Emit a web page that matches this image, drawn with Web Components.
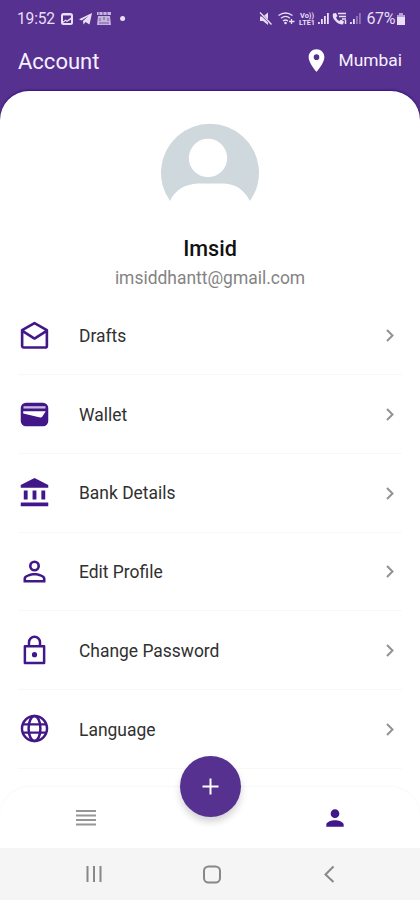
<!DOCTYPE html>
<html lang="en">
<head>
<meta charset="utf-8">
<meta name="viewport" content="width=device-width, initial-scale=1">
<title>Account</title>
<style>
    body {
        margin: 0;
        height: 900px;
        overflow: hidden;
        font-family: Roboto, "Noto Sans", sans-serif;
    }
</style>
</head>
<body>
<account-screen></account-screen>
<script>
const ICONS = {
    drafts: `<path fill="none" stroke="currentColor" stroke-width="1.9" stroke-linejoin="round" d="M3 8.100 12 3l9 5.100V19.600a1.100 1.100 0 0 1-1.100 1.100H4.100A1.100 1.100 0 0 1 3 19.600zM3.200 8.600 12 14.200l8.800-5.600"/>`,
    wallet: `<rect x="2" y="3.500" width="20" height="17" rx="3.800"/><path fill="none" stroke="#c9bbe0" stroke-width="1.700" d="M4 6.800h16"/><path fill="#fff" d="M3.800 9.700h16.400l-2.600 4a1.400 1.400 0 0 1-1.500.5L3.800 11.200z"/>`,
    bank: `<path d="M12 1.500 2 6.600v1.900h20V6.600zM4.200 10.500h2.800v6.500H4.200zM10.600 10.500h2.800v6.500h-2.800zM17 10.500h2.800v6.500H17zM2 19.300h20V22H2z"/>`,
    profile: `<path d="M12 5.900a2.100 2.100 0 1 1 0 4.200 2.100 2.100 0 0 1 0-4.200m0 9c2.970 0 6.100 1.460 6.100 2.100v1.100H5.900V17c0-.64 3.130-2.100 6.100-2.100M12 4a4 4 0 1 0 0 8 4 4 0 0 0 0-8m0 9c-2.670 0-8 1.340-8 4v3h16v-3c0-2.660-5.330-4-8-4"/>`,
    lock: `<path fill="none" stroke="currentColor" stroke-width="1.800" stroke-linejoin="round" d="M5 8.900h14v12.200H5zM8 8.800V6a4 4 0 0 1 8 0v2.800"/><circle cx="12" cy="15" r="1.900"/>`,
    globe: `<g fill="none" stroke="currentColor" stroke-width="1.800"><circle cx="12" cy="12" r="9.100"/><ellipse cx="12" cy="12" rx="4.300" ry="9.100"/><path d="M3.600 9h16.800M3.600 15h16.800"/></g>`,
    person: `<path d="M12 12a4 4 0 1 0 0-8 4 4 0 0 0 0 8m0 2c-2.670 0-8 1.340-8 4v2h16v-2c0-2.660-5.330-4-8-4"/>`,
    pin: `<path fill-rule="evenodd" d="M12 2C8.130 2 5 5.130 5 9c0 5.250 7 13 7 13s7-7.750 7-13c0-3.870-3.130-7-7-7m0 9.500a2.500 2.500 0 1 1 0-5 2.500 2.500 0 0 1 0 5"/>`
};

class AppIcon extends HTMLElement {
    connectedCallback() {
        this.attachShadow({ mode: "open" }).innerHTML = `
            <style>
                :host { display: block; flex: none; width: 33px; height: 33px; }
                svg { display: block; width: 100%; height: 100%; fill: currentColor; }
            </style>
            <svg viewBox="0 0 24 24">${ICONS[this.getAttribute("name")]}</svg>`;
    }
}

class StatusBar extends HTMLElement {
    connectedCallback() {
        this.attachShadow({ mode: "open" }).innerHTML = `
            <style>
                :host {
                    display: flex;
                    justify-content: space-between;
                    align-items: center;
                    box-sizing: border-box;
                    height: 37px;
                    padding: 0 14px 0 17px;
                    color: #e9dff6;
                }
                div { display: flex; align-items: center; }
                svg { display: block; fill: currentColor; }
                .time { width: 38px; font-size: 15.600px; letter-spacing: -.2px; }
                .percent { font-size: 16px; letter-spacing: -.4px; }
            </style>
            <div>
                <span class="time">19:52</span>
                <svg width="72" height="20" viewBox="55 9 72 20">
                    <path fill-rule="evenodd" d="M63.500 13h7a2.500 2.500 0 0 1 2.500 2.500v7a2.500 2.500 0 0 1-2.500 2.500h-7a2.500 2.500 0 0 1-2.500-2.500v-7a2.500 2.500 0 0 1 2.500-2.500m-.5 2.500v6l2.500-2 1.500 1 4-3v-2z"/>
                    <path d="M63 23l2.500-2 1.500 1 4-2.500V23z" fill="#56318f"/>
                    <path d="M79 19.200 92 13l-2.500 11.500-4-2.500-2 2.500-.5-3.500 5.500-5-7 4.500z"/>
                    <g opacity=".75">
                        <path d="M97 12h14v3H97zM98 16h12l1 9H97z"/>
                        <path d="M99 12v3M103 12v3M107 12v3M100 18v3M104 17v3M108 18v3M99 23h10" fill="none" stroke="#56318f" stroke-width=".7"/>
                    </g>
                    <circle cx="122.600" cy="18.500" r="2.500"/>
                </svg>
            </div>
            <div>
                <svg width="107" height="20" viewBox="258 9 107 20">
                    <path d="M259 16.500h3l5-4v12.500l-5-4h-3z"/>
                    <path d="m259 13 12 12" stroke="#56318f" stroke-width="2.400"/>
                    <path d="m259 12.500 11.500 12" stroke="currentColor" stroke-width="1.400"/>
                    <g fill="none" stroke="currentColor" stroke-width="1.300">
                        <path d="M277.500 15.500q7-5 14 0M280 18.200q4.500-3.500 9 0M282 21q2.500-2 5 0"/>
                        <path d="M290.500 19v5M288 21.500h5.500"/>
                    </g>
                    <circle cx="284.500" cy="23" r="1.300"/>
                    <text x="299" y="18" font-size="7" font-weight="700" textLength="14" lengthAdjust="spacingAndGlyphs">Vo))</text>
                    <text x="298" y="25" font-size="7" font-weight="700" textLength="16" lengthAdjust="spacingAndGlyphs">LTE1</text>
                    <path d="M317 22h1.800v2H317zM320 19h1.800v5H320zM323 16h1.800v8H323zM326 13h1.800v11H326z"/>
                    <path d="M332 13.500 335 13l1.500 3-1.500 1.500q1 2.500 3.500 3.500l1.500-1.500 3 2-1 3q-5 0-8-4-3-3-2-7"/>
                    <path d="M337 13.500h8M338 16.500h7M341 19h4M344.500 20v4" fill="none" stroke="currentColor" stroke-width="1.500"/>
                    <path d="M349 22h1.800v2H349zM352 19h1.800v5H352z"/>
                    <path opacity=".4" d="M355 16h1.800v8H355zM358 13h1.800v11H358z"/>
                </svg>
                <span class="percent">67%</span>
                <svg width="11" height="16" viewBox="0 0 11 16">
                    <path opacity=".65" d="M4 2h4v2h2v3H2V4h2z"/>
                    <path d="M2 6h8v8H2z"/>
                </svg>
            </div>`;
    }
}

class AppHeader extends HTMLElement {
    connectedCallback() {
        this.attachShadow({ mode: "open" }).innerHTML = `
            <style>
                :host {
                    display: flex;
                    align-items: center;
                    box-sizing: border-box;
                    height: 54px;
                    padding: 0 18px 7px;
                    color: #f7f0ff;
                }
                h1 { margin: 0; padding-top: 2px; flex: 1; font-size: 22px; font-weight: 400; }
                app-icon { width: 27px; height: 27px; margin-right: 8.500px; color: #fff; }
                span { font-size: 17.400px; line-height: 20px; padding-bottom: 1px; }
            </style>
            <h1><slot></slot></h1>
            <app-icon name="pin"></app-icon>
            <span>${this.getAttribute("city")}</span>`;
    }
}

class ProfileCard extends HTMLElement {
    connectedCallback() {
        this.attachShadow({ mode: "open" }).innerHTML = `
            <style>
                :host {
                    display: flex;
                    flex-direction: column;
                    align-items: center;
                    box-sizing: border-box;
                    height: 205.500px;
                    padding-top: 32px;
                }
                svg { display: block; }
                h2 { margin: 33px 0 0; font-size: 21.600px; line-height: 26px; font-weight: 500; color: #111; }
                p { margin: 4px 0 0; font-size: 17.450px; line-height: 24px; color: #838383; }
            </style>
            <svg width="100" height="80" viewBox="0 0 100 80">
                <path fill="#cfd8dd" d="M10 78A49 49 0 1 1 90 78C84 67 76 61 64 60.500H38C25 61 15 67 10 78z"/>
                <circle cx="48" cy="35" r="19.200" fill="#fff"/>
            </svg>
            <h2>${this.getAttribute("name")}</h2>
            <p>${this.getAttribute("email")}</p>`;
    }
}

class MenuRow extends HTMLElement {
    connectedCallback() {
        this.attachShadow({ mode: "open" }).innerHTML = `
            <style>
                :host {
                    display: flex;
                    align-items: center;
                    box-sizing: border-box;
                    height: 78.700px;
                    margin: 0 18px;
                    border-bottom: 1px solid #f8f8f8;
                    color: #303030;
                    font-size: 17.450px;
                }
                app-icon { margin-right: 28px; color: #41178a; }
                .label { flex: 1; padding-top: 1.500px; }
                .chevron { display: block; margin-right: 7px; }
            </style>
            <app-icon name="${this.getAttribute("icon")}"></app-icon>
            <span class="label"><slot></slot></span>
            <svg class="chevron" width="10" height="14" viewBox="0 0 10 14">
                <path d="m2 2 5.500 5.500L2 13" fill="none" stroke="#929292" stroke-width="2"/>
            </svg>`;
    }
}

class TabBar extends HTMLElement {
    connectedCallback() {
        this.attachShadow({ mode: "open" }).innerHTML = `
            <style>
                :host {
                    display: grid;
                    grid-template-columns: 172px 77px 171px;
                    justify-items: center;
                    align-items: center;
                    position: relative;
                    height: 61px;
                    background: #fff;
                    border-radius: 30px 30px 0 0;
                    box-shadow: 0 -1px 2px rgba(0, 0, 0, .035);
                }
                app-icon { width: 26px; height: 26px; color: #41178a; }
                .fab {
                    align-self: start;
                    display: grid;
                    place-items: center;
                    width: 61px;
                    height: 61px;
                    margin-top: -31px;
                    border-radius: 50%;
                    background: #56318f;
                    box-shadow: 0 5px 7px rgba(0, 0, 0, .17);
                }
            </style>
            <svg width="20" height="17" viewBox="0 0 20 17">
                <path d="M0 2h20M0 6.500h20M0 11h20M0 15.500h20" stroke="#969696" stroke-width="1.900"/>
            </svg>
            <div class="fab">
                <svg width="17" height="17" viewBox="0 0 17 17">
                    <path d="M8.500 .5v16M.5 8.500h16" stroke="#fff" stroke-width="2"/>
                </svg>
            </div>
            <app-icon name="person"></app-icon>`;
    }
}

class SystemNav extends HTMLElement {
    connectedCallback() {
        this.attachShadow({ mode: "open" }).innerHTML = `
            <style>
                :host {
                    display: flex;
                    justify-content: space-between;
                    align-items: center;
                    box-sizing: border-box;
                    height: 52px;
                    padding: 0 81px 0 84px;
                    background: #f5f5f5;
                }
                svg { display: block; fill: none; stroke: #888; stroke-width: 2; }
            </style>
            <svg width="20" height="20" viewBox="0 0 20 20"><path d="M3.500 2v16M10 2v16M16.500 2v16"/></svg>
            <svg width="20" height="20" viewBox="0 0 20 20"><rect x="2" y="2.500" width="16" height="16" rx="4.500"/></svg>
            <svg width="20" height="20" viewBox="0 0 20 20"><path d="m14.500 2.500-8 8 8 7.500"/></svg>`;
    }
}

class AccountScreen extends HTMLElement {
    connectedCallback() {
        this.attachShadow({ mode: "open" }).innerHTML = `
            <style>
                :host {
                    display: flex;
                    flex-direction: column;
                    width: 420px;
                    height: 900px;
                    background: #56318f;
                }
                main {
                    flex: 1;
                    min-height: 0;
                    overflow: hidden;
                    background: #fff;
                    border-radius: 29px 29px 0 0;
                    box-shadow: 0 -1px 2px #391078;
                }
                footer { flex: none; }
                tab-bar { margin-top: -61px; }
            </style>
            <status-bar></status-bar>
            <app-header city="Mumbai">Account</app-header>
            <main>
                <profile-card name="Imsid" email="imsiddhantt@gmail.com"></profile-card>
                <menu-row icon="drafts">Drafts</menu-row>
                <menu-row icon="wallet">Wallet</menu-row>
                <menu-row icon="bank">Bank Details</menu-row>
                <menu-row icon="profile">Edit Profile</menu-row>
                <menu-row icon="lock">Change Password</menu-row>
                <menu-row icon="globe">Language</menu-row>
            </main>
            <footer>
                <tab-bar></tab-bar>
                <system-nav></system-nav>
            </footer>`;
    }
}

customElements.define("app-icon", AppIcon);
customElements.define("status-bar", StatusBar);
customElements.define("app-header", AppHeader);
customElements.define("profile-card", ProfileCard);
customElements.define("menu-row", MenuRow);
customElements.define("tab-bar", TabBar);
customElements.define("system-nav", SystemNav);
customElements.define("account-screen", AccountScreen);
</script>
</body>
</html>
